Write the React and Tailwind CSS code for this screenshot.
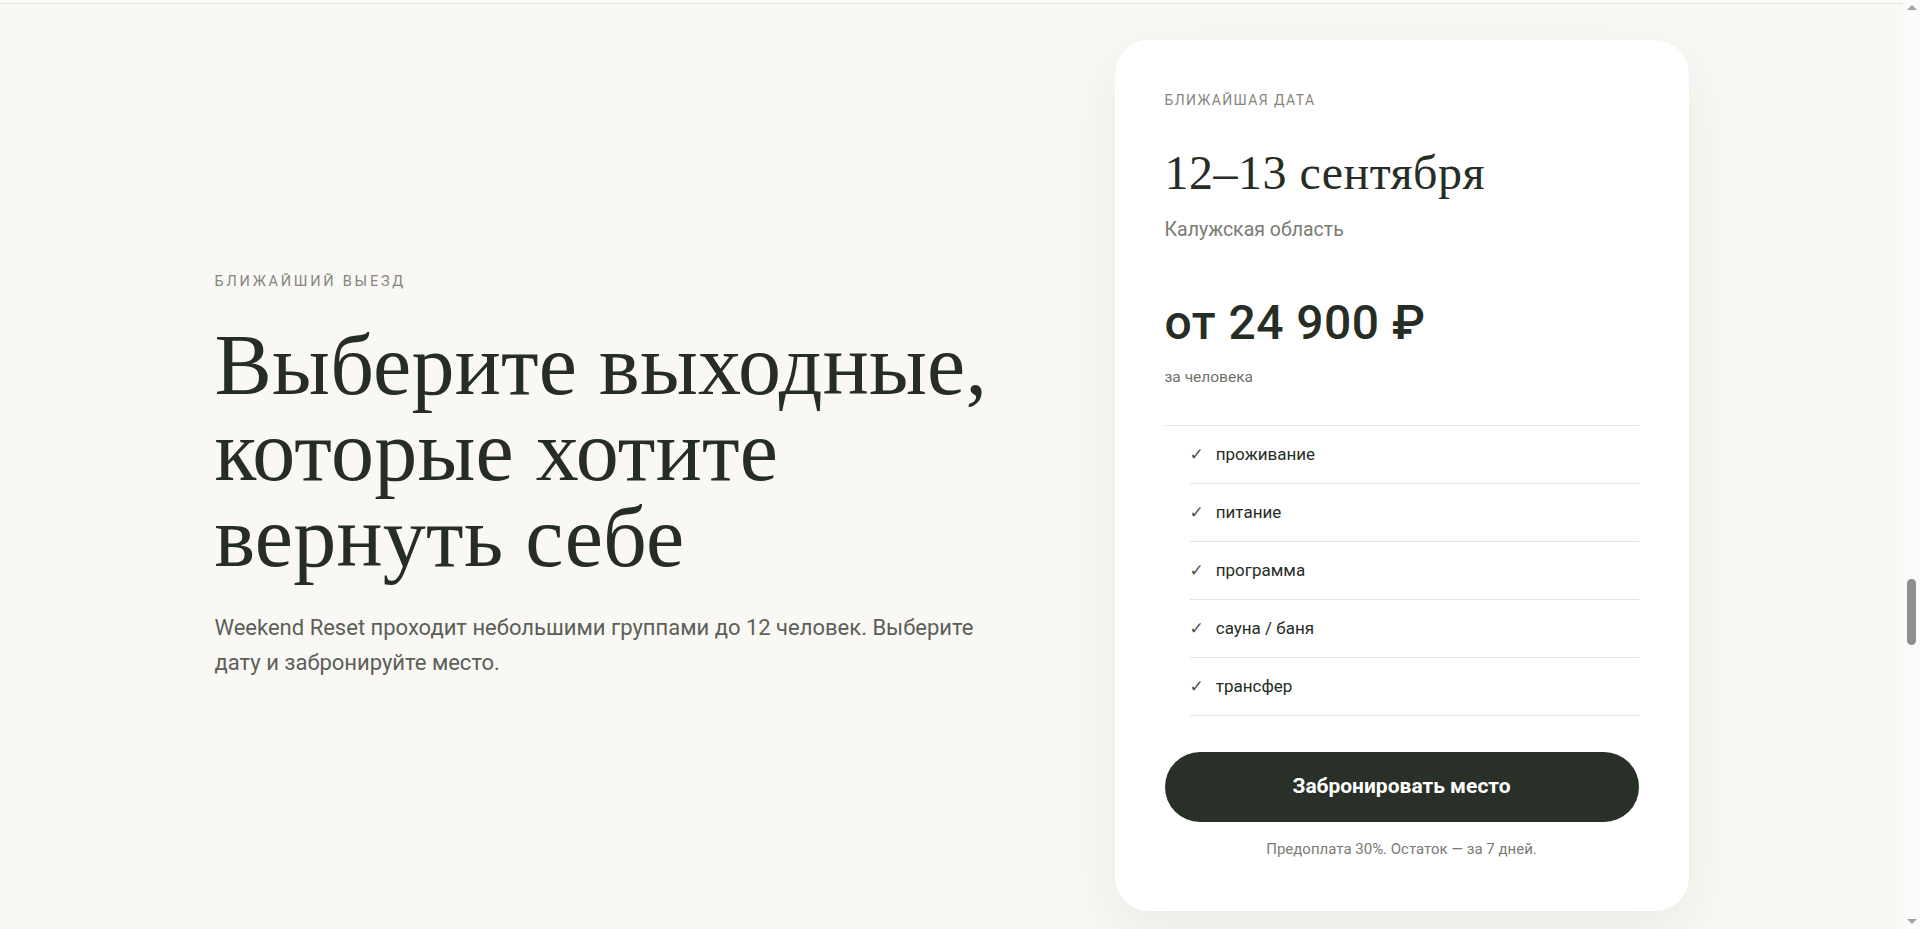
const items = ['проживание', 'питание', 'программа', 'сауна / баня', 'трансфер'];

function Scrollbar() {
  return (
    <div className="fixed right-0 top-0 flex h-screen w-[17px] flex-col items-center bg-[#fbfbfb]">
      <div className="mt-[5px] h-0 w-0 border-x-[5px] border-b-[5px] border-x-transparent border-b-[#a3a3a3]" />
      <div className="mt-[569px] h-[66px] w-[9px] rounded-full bg-[#8e8e8e]" />
      <div className="mt-auto mb-[5px] h-0 w-0 border-x-[5px] border-t-[5px] border-x-transparent border-t-[#a3a3a3]" />
    </div>
  );
}

export default function App() {
  return (
    <div className="min-h-screen bg-[#f9f8f4] pr-[17px] font-['Roboto',sans-serif] text-[#262d25]">
      <div className="h-[4px] bg-[#fbfbf9] border-b border-[#e7e6df]" />
      <section className="pt-[36px] pb-[40px]">
        <div className="mx-auto flex w-[1474px] items-center justify-between">
          {/* left column */}
          <div className="w-[790px]">
            <p className="text-[14.5px] leading-[20px] uppercase tracking-[0.19em] text-[#86867c]">Ближайший выезд</p>
            <h1 className="mt-[30px] font-['Liberation_Serif',serif] text-[86px] leading-[86px] tracking-[0.003em] text-[#262d25]">
              Выберите выходные, которые хотите вернуть себе
            </h1>
            <p className="mt-[30px] text-[22px] leading-[35px] text-[#5c5f58]">
              Weekend Reset проходит небольшими группами до 12 человек. Выберите дату и забронируйте место.
            </p>
          </div>

          {/* card */}
          <div className="w-[574px] rounded-[34px] bg-white px-[50px] pt-[50px] pb-[52px] shadow-[0_20px_60px_rgba(40,45,35,0.07)]">
            <p className="text-[14px] leading-[20px] uppercase tracking-[0.1em] text-[#86867c]">Ближайшая дата</p>
            <h2 className="mt-[35px] font-['Liberation_Serif',serif] text-[48px] leading-[56px] tracking-[0.01em] text-[#262d25]">
              12–13 сентября
            </h2>
            <p className="mt-[16px] text-[19.5px] leading-[26px] text-[#7a7b73]">Калужская область</p>
            <p className="mt-[52px] text-[48px] font-medium leading-[56px] tracking-[0.01em] text-[#262d25]">от 24 900 ₽</p>
            <p className="mt-[16px] text-[15.5px] leading-[20px] text-[#6f706a]">за человека</p>

            <ul className="mt-[38px] border-t border-[#e5e4de]">
              {items.map((it) => (
                <li key={it} className="ml-[25px] flex h-[58px] items-center gap-[12px] border-b border-[#e5e4de]">
                  <span className="font-['DejaVu_Sans',sans-serif] text-[17px] text-[#4b5249]">✓</span>
                  <span className="text-[17px] text-[#262d25]">{it}</span>
                </li>
              ))}
            </ul>

            <button className="mt-[36px] flex h-[70px] w-full items-center justify-center rounded-full bg-[#283027] text-[21px] font-bold text-white">
              Забронировать место
            </button>
            <p className="mt-[17px] text-center text-[15px] leading-[20px] text-[#7a7b73]">Предоплата 30%. Остаток — за 7 дней.</p>
          </div>
        </div>
      </section>
      <Scrollbar />
    </div>
  );
}
